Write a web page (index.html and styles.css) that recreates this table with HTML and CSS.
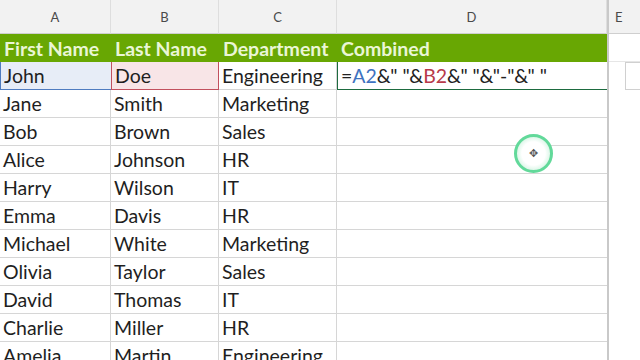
FILE: index.html
```html
<!DOCTYPE html>
<html>
<head>
<meta charset="utf-8">
<link rel="stylesheet" href="styles.css">
</head>
<body>
<div class="wrap">
  <div class="sheet">
    <div class="ch">A</div><div class="ch">B</div><div class="ch">C</div><div class="ch">D</div>
    <div class="hd">First Name</div><div class="hd">Last Name</div><div class="hd">Department</div><div class="hd">Combined</div>
    <div class="c ref-a">John</div><div class="c ref-b">Doe</div><div class="c">Engineering</div><div class="c active"><span class="k">=</span><span class="ra">A2</span><span class="k">&amp;" "&amp;</span><span class="rb">B2</span><span class="k">&amp;" "&amp;"-"&amp;" "</span></div>
    <div class="c">Jane</div><div class="c">Smith</div><div class="c">Marketing</div><div class="c"></div>
    <div class="c">Bob</div><div class="c">Brown</div><div class="c">Sales</div><div class="c"></div>
    <div class="c">Alice</div><div class="c">Johnson</div><div class="c">HR</div><div class="c"></div>
    <div class="c">Harry</div><div class="c">Wilson</div><div class="c">IT</div><div class="c"></div>
    <div class="c">Emma</div><div class="c">Davis</div><div class="c">HR</div><div class="c"></div>
    <div class="c">Michael</div><div class="c">White</div><div class="c">Marketing</div><div class="c"></div>
    <div class="c">Olivia</div><div class="c">Taylor</div><div class="c">Sales</div><div class="c"></div>
    <div class="c">David</div><div class="c">Thomas</div><div class="c">IT</div><div class="c"></div>
    <div class="c">Charlie</div><div class="c">Miller</div><div class="c">HR</div><div class="c"></div>
    <div class="c">Amelia</div><div class="c">Martin</div><div class="c">Engineering</div><div class="c"></div>
  </div>
  <div class="side">
    <div class="ch side-ch">E</div>
    <div class="side-row"></div>
    <div class="side-box"></div>
  </div>
  <div class="cursor"><span class="cross">✥</span></div>
</div>
</body>
</html>
```
FILE: styles.css
```css
html, body {
  margin: 0;
  padding: 0;
  background: #fff;
  overflow: hidden;
}
.wrap {
  position: relative;
  width: 640px;
  height: 360px;
  display: flex;
  overflow: hidden;
  font-family: Lato, "Noto Sans", sans-serif;
}
.sheet {
  display: grid;
  grid-template-columns: 111px 108px 118px 270px;
  grid-template-rows: 34px 28px repeat(11, 28px);
  border-right: 2px solid #c9c9c9;
  flex: none;
}
.ch {
  background: #f2f2f2;
  border-right: 1px solid #dedede;
  border-bottom: 1px solid #cfcfcf;
  color: #4a4a4a;
  font-size: 13px;
  display: flex;
  align-items: center;
  justify-content: center;
  box-sizing: border-box;
}
.hd {
  background: #68a703;
  color: #eaf6d6;
  font-weight: 700;
  font-size: 19.5px;
  padding-left: 4px;
  display: flex;
  align-items: center;
  box-sizing: border-box;
}
.c {
  border-right: 1px solid #d6d6d6;
  border-bottom: 1px solid #d6d6d6;
  color: #1f1f1f;
  font-size: 19.5px;
  padding-left: 3px;
  display: flex;
  align-items: center;
  box-sizing: border-box;
  white-space: nowrap;
  position: relative;
}
.c:nth-child(4n) {
  border-right: none;
}
.ref-a {
  background: #e7edf7;
  border: 1px solid #4f7cc0;
  border-top: none;
  border-right: none;
}
.ref-b {
  background: #f8e5e7;
  border: 1px solid #c2505e;
  border-top: none;
}
.active {
  border: 1.5px solid #1d6b3f;
  border-top: none;
  border-right: none;
}
.ra { color: #3e72c0; }
.rb { color: #b8394a; }
.k { color: #222; }
.side {
  flex: 1;
  display: flex;
  flex-direction: column;
}
.side-ch {
  height: 34px;
  flex: none;
  justify-content: flex-start;
  padding-left: 6px;
  border-right: none;
}
.side-row {
  height: 28px;
  border-bottom: 1px solid #e6e6e6;
  box-sizing: border-box;
}
.side-box {
  margin-left: 16px;
  height: 28px;
  border: 1px solid #d0d0d0;
  border-right: none;
  box-sizing: border-box;
}
.cursor {
  position: absolute;
  left: 514px;
  top: 134px;
  width: 39px;
  height: 39px;
  border-radius: 50%;
  border: 3.5px solid #62d99a;
  box-sizing: border-box;
  background: radial-gradient(circle, #ffffff 0 50%, #dcf6e8 72%);
  display: flex;
  align-items: center;
  justify-content: center;
}
.cross {
  font-size: 11px;
  color: #555;
  line-height: 1;
  font-family: "DejaVu Sans", sans-serif;
}
```
